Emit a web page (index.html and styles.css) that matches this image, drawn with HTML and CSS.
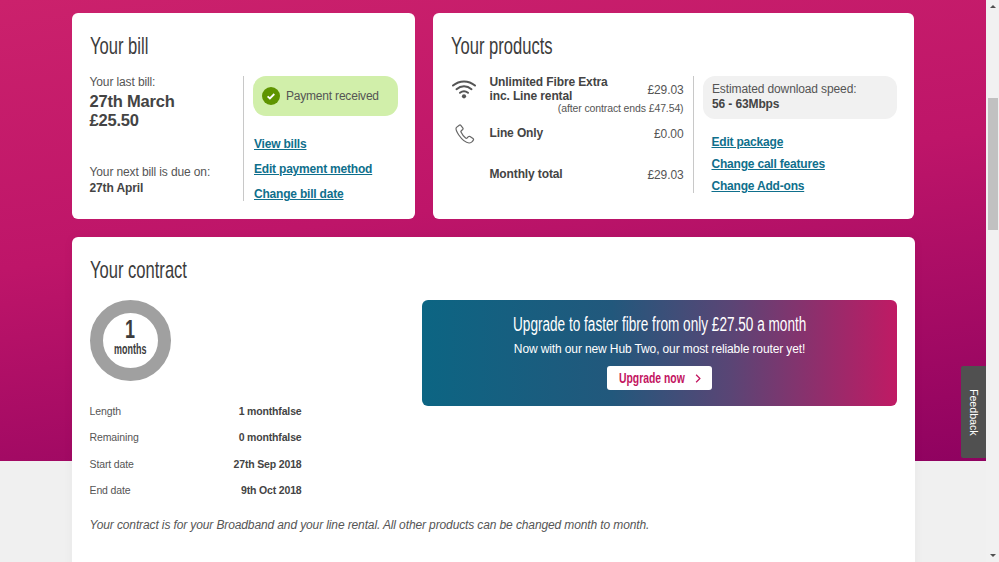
FILE: index.html
```html
<!DOCTYPE html>
<html lang="en">
<head>
<meta charset="utf-8">
<title>Your account</title>
<link rel="stylesheet" href="styles.css">
</head>
<body>
<main class="page">
  <div class="top-row">
    <section class="card bill">
      <h2 class="title"><span class="narrow">Your bill</span></h2>
      <div class="split">
        <div class="bill-info">
          <div>
            <p class="muted">Your last bill:</p>
            <p class="big">27th March<br>£25.50</p>
          </div>
          <div>
            <p class="muted">Your next bill is due on:</p>
            <p class="strong">27th April</p>
          </div>
        </div>
        <div class="side">
          <div class="status">
            <svg class="check" viewBox="0 0 18 18" width="18" height="18"><circle cx="9" cy="9" r="9" fill="#5f9400"/><path d="M5.6 9.3l2.3 2.1 4.4-4.4" fill="none" stroke="#fff" stroke-width="1.8"/></svg>
            <span>Payment received</span>
          </div>
          <nav class="links bill-links">
            <a href="#">View bills</a>
            <a href="#">Edit payment method</a>
            <a href="#">Change bill date</a>
          </nav>
        </div>
      </div>
    </section>
    <section class="card products">
      <h2 class="title"><span class="narrow">Your products</span></h2>
      <div class="split">
        <div class="product-list">
          <div class="product first">
            <svg class="picon" viewBox="0 0 24 20" width="24" height="20"><g fill="none" stroke="#555" stroke-width="2" stroke-linecap="round"><path d="M1 6.5C7.500 1 16.500 1 23 6.500"/><path d="M4.500 10.200C9 6.400 15 6.400 19.500 10.200"/><path d="M8 13.800c2.500-2 5.500-2 8 0"/></g><circle cx="12" cy="17.300" r="2.100" fill="#555"/></svg>
            <div class="pname">Unlimited Fibre Extra<br>inc. Line rental</div>
            <div class="pprice">£29.03</div>
            <div class="pnote">(after contract ends £47.54)</div>
          </div>
          <div class="product second">
            <svg class="picon" viewBox="0 0 20 20" width="20" height="20"><path d="M4.300 1.200L1.500 3.400C.6 4.300 1 6.800 3.800 11c3 4.300 6.400 7.700 10.200 8 1.700.1 3.800-1.800 4.400-3 .3-.6.100-1.100-.4-1.500l-3-2c-.6-.4-1.100-.3-1.600.2l-1.300 1.300c-.5.400-1 .4-1.500 0C8.900 12.700 7 10.300 6 8.100c-.2-.5-.1-1 .3-1.300L7.700 5.500c.4-.4.500-.9.200-1.400L5.800 1.400c-.4-.5-1-.6-1.500-.2z" fill="none" stroke="#666" stroke-width="1.200"/></svg>
            <div class="pname">Line Only</div>
            <div class="pprice">£0.00</div>
          </div>
          <div class="product total">
            <span class="picon"></span>
            <div class="pname">Monthly total</div>
            <div class="pprice">£29.03</div>
          </div>
        </div>
        <div class="side">
          <div class="speed">
            <p class="muted">Estimated download speed:</p>
            <p class="strong">56 - 63Mbps</p>
          </div>
          <nav class="links product-links">
            <a href="#">Edit package</a>
            <a href="#">Change call features</a>
            <a href="#">Change Add-ons</a>
          </nav>
        </div>
      </div>
    </section>
  </div>
  <section class="card contract">
    <h2 class="title"><span class="narrow">Your contract</span></h2>
    <div class="contract-body">
      <div class="contract-left">
        <div class="donut">
          <span class="donut-num">1</span>
          <span class="donut-label">months</span>
        </div>
        <dl class="terms">
          <div class="term"><dt>Length</dt><dd>1 monthfalse</dd></div>
          <div class="term"><dt>Remaining</dt><dd>0 monthfalse</dd></div>
          <div class="term"><dt>Start date</dt><dd>27th Sep 2018</dd></div>
          <div class="term"><dt>End date</dt><dd>9th Oct 2018</dd></div>
        </dl>
      </div>
      <div class="promo">
        <h3 class="promo-title">Upgrade to faster fibre from only £27.50 a month</h3>
        <p class="promo-sub">Now with our new Hub Two, our most reliable router yet!</p>
        <a class="promo-btn" href="#"><span class="btn-text">Upgrade now</span>
          <svg viewBox="0 0 8 12" width="6" height="9"><path d="M1.500 1l5 5-5 5" fill="none" stroke="#c3145f" stroke-width="1.700"/></svg>
        </a>
      </div>
    </div>
    <p class="note">Your contract is for your Broadband and your line rental. All other products can be changed month to month.</p>
  </section>
  <a class="feedback" href="#">Feedback</a>
</main>
<aside class="scrollbar">
  <span class="arrow up"></span>
  <span class="thumb"></span>
  <span class="arrow down"></span>
</aside>
</body>
</html>
```
FILE: styles.css
```css
* { box-sizing: border-box; }
html, body { height: 100%; overflow: hidden; }
body {
  margin: 0;
  display: flex;
  font-family: "Liberation Sans", Arial, sans-serif;
  font-size: 12px;
  letter-spacing: -0.12px;
  color: #444;
}
p, h2, h3, dl, dd { margin: 0; }

.page {
  position: relative;
  flex: 1;
  min-width: 0;
  height: 562px;
  overflow: hidden;
  padding: 13px 72px 0;
  background: linear-gradient(172deg, #cb216c 0%, #be1569 45%, #8f0260 100%) 0 0 / 100% 461px no-repeat, #f0f0f0;
}
.top-row {
  display: grid;
  grid-template-columns: 343.300px 481px;
  column-gap: 17.700px;
}
.card {
  background: #fff;
  border-radius: 6px;
  padding: 20px 17.500px 0;
}
.bill, .products { height: 206px; }
.products { padding-left: 18px; }
.title {
  font-weight: 400;
  font-size: 24px;
  line-height: 25px;
  color: #3c3c3c;
  height: 43px;
  letter-spacing: 0;
}
.narrow { display: inline-block; transform: scaleX(.69); transform-origin: 0 50%; white-space: nowrap; }
.split { display: flex; }
.muted { color: #555; }

/* bill */
.bill-info {
  width: 154.500px;
  height: 125px;
  border-right: 1px solid #c8c8c8;
  display: flex;
  flex-direction: column;
  justify-content: space-between;
  line-height: 16px;
  padding-right: 4px;
  flex: none;
  white-space: nowrap;
}
.bill-info > div:first-child { margin-top: -2px; }
.big { font-size: 16.500px; font-weight: 700; line-height: 19px; margin-top: 2px; color: #444; letter-spacing: -0.2px; }
.strong { font-weight: 700; color: #444; }
.bill-info > div:last-child { padding-bottom: 5px; }
.side { flex: 1; min-width: 0; padding-left: 9px; }
.status {
  display: flex;
  align-items: center;
  gap: 6px;
  height: 40px;
  width: 145px;
  padding-left: 9px;
  background: #d1efaa;
  border-radius: 13px;
  color: #555;
  letter-spacing: -0.2px;
}
.check { flex: none; }
.links { display: flex; flex-direction: column; padding-left: 1px; }
.links a {
  color: #0f6f8c;
  font-weight: 700;
  letter-spacing: -0.2px;
  text-decoration: underline;
  line-height: 15px;
}
.bill-links { gap: 10px; margin-top: 21px; }

/* products */
.product-list {
  width: 243px;
  height: 117px;
  border-right: 1px solid #c8c8c8;
  padding-right: 9.500px;
  flex: none;
}
.product {
  display: grid;
  grid-template-columns: 38.500px 1fr auto;
  align-items: center;
}
.picon { display: block; margin-left: 1px; }
.pname { font-weight: 700; line-height: 13.500px; color: #444; }
.pprice { color: #555; }
.pnote { grid-column: 1 / -1; text-align: right; font-size: 10.500px; color: #555; line-height: 13px; margin-top: -1px; }
.first .picon { margin-top: -2px; }
.second .picon { margin-left: 4px; }
.second { margin-top: 9px; }
.total { margin-top: 24px; }
.speed {
  background: #f1f1f1;
  border-radius: 12px;
  height: 42.500px;
  width: 194px;
  padding: 6px 9px;
  line-height: 14.500px;
}
.product-links { gap: 7px; margin-top: 16px; padding-left: 8.500px; }

/* contract */
.contract {
  margin-top: 18px;
  height: 400px;
  width: 842.500px;
  box-shadow: 0 0 12px rgba(0, 0, 0, .04);
}
.contract-body { display: flex; justify-content: space-between; }
.contract-left { width: 212px; }
.donut {
  width: 81px;
  height: 81px;
  border-radius: 50%;
  border: 13px solid #a0a0a0;
  display: flex;
  flex-direction: column;
  align-items: center;
  color: #3c3c3c;
  letter-spacing: 0;
}
.donut-num { font-size: 25px; font-weight: 700; line-height: 24px; margin-top: 4px; transform: scaleX(.72); }
.donut-label { font-weight: 700; font-size: 14px; line-height: 14px; margin-top: 1px; transform: scaleX(.64); }
.terms { margin-top: 17px; font-size: 10.500px; }
.term { display: flex; justify-content: space-between; height: 26.300px; line-height: 26.300px; }
.term dt { color: #555; }
.term dd { font-weight: 700; color: #444; letter-spacing: -0.16px; }
.promo {
  width: 475px;
  height: 106px;
  border-radius: 6px;
  background: linear-gradient(90deg, #0c6583 0%, #22587c 40%, #5a4575 65%, #c01a64 100%);
  display: flex;
  flex-direction: column;
  align-items: center;
  color: #fff;
  padding-top: 12px;
}
.promo-title {
  font-weight: 400;
  font-size: 20px;
  line-height: 24px;
  letter-spacing: 0;
  white-space: nowrap;
  transform: scaleX(.68);
}
.promo-sub { margin-top: 5px; line-height: 16px; }
.promo-btn {
  display: flex;
  align-items: center;
  gap: 10px;
  width: 105px;
  height: 24px;
  margin-top: 9px;
  padding-left: 12px;
  background: #fff;
  border-radius: 3px;
  color: #c3145f;
  text-decoration: none;
  font-weight: 700;
  font-size: 15.500px;
  letter-spacing: 0;
}
.btn-text { display: block; width: 66px; white-space: nowrap; transform: scaleX(.67); transform-origin: 0 50%; }
.note { margin-top: 14px; font-style: italic; color: #555; line-height: 16px; }

.feedback {
  position: absolute;
  right: 0;
  top: 366px;
  width: 25px;
  height: 92px;
  background: #505050;
  color: #fff;
  writing-mode: vertical-rl;
  text-align: center;
  line-height: 24px;
  font-size: 10.800px;
  text-decoration: none;
  border-radius: 2px 0 0 2px;
}

/* scrollbar */
.scrollbar {
  flex: none;
  width: 13px;
  height: 562px;
  background: #f1f1f1;
  display: flex;
  flex-direction: column;
  align-items: center;
  padding-top: 5px;
}
.thumb { width: 10px; height: 132px; margin-top: 90px; background: #c1c1c1; }
.arrow { width: 0; height: 0; border-left: 3px solid transparent; border-right: 3px solid transparent; }
.up { border-bottom: 3px solid #505050; }
.down { border-top: 3px solid #505050; margin-top: auto; margin-bottom: 5px; }
```
